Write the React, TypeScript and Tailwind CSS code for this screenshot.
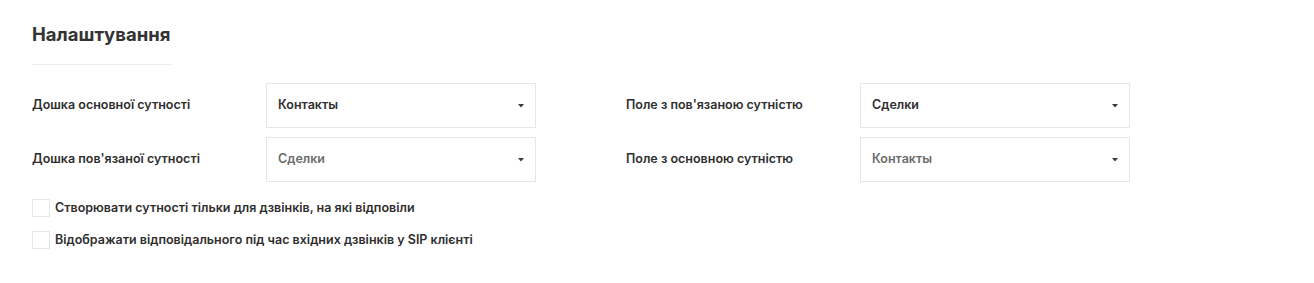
import React from 'react'

function Select({ value, muted }: { value: string; muted?: boolean }) {
  return (
    <div className="flex h-[45px] w-[270px] items-center justify-between border border-[#e6e6e6] bg-white pl-[11px] pr-[10px]">
      <span className={`text-[12.5px] font-semibold ${muted ? 'text-[#6b6b6b]' : 'text-[#2f2f2f]'}`}>{value}</span>
      <svg width="6" height="4" viewBox="0 0 6 4" className="mr-[1px]">
        <path d="M0 0 L6 0 L3 3.5 Z" fill="#3a3a3a" />
      </svg>
    </div>
  )
}

function Field({ label, value, muted }: { label: string; value: string; muted?: boolean }) {
  return (
    <div className="flex items-center">
      <div className="w-[234px] text-[12.5px] font-semibold text-[#2f2f2f]">{label}</div>
      <Select value={value} muted={muted} />
    </div>
  )
}

function Check({ label }: { label: string }) {
  return (
    <label className="flex items-center gap-[5px]">
      <span className="h-[18px] w-[18px] border border-[#e6e6e6] bg-white" />
      <span className="text-[12.5px] font-semibold text-[#2f2f2f]">{label}</span>
    </label>
  )
}

export default function App() {
  return (
    <div className="h-[283px] w-full bg-white px-[32px] pt-[21px]" style={{ fontFamily: 'Inter, "Noto Sans", sans-serif' }}>
      <h2 className="text-[18.5px] font-bold leading-[26px] text-[#333]">Налаштування</h2>
      <div className="mt-[17px] h-px w-[139px] bg-[#ececec]" />
      <div className="mt-[18px] grid grid-cols-[594px_auto] gap-y-[9px]">
        <Field label="Дошка основної сутності" value="Контакты" />
        <Field label="Поле з пов'язаною сутністю" value="Сделки" />
        <Field label="Дошка пов'язаної сутності" value="Сделки" muted />
        <Field label="Поле з основною сутністю" value="Контакты" muted />
      </div>
      <div className="mt-[17px] flex flex-col gap-[13px]">
        <Check label="Створювати сутності тільки для дзвінків, на які відповіли" />
        <Check label="Відображати відповідального під час вхідних дзвінків у SIP клієнті" />
      </div>
    </div>
  )
}
